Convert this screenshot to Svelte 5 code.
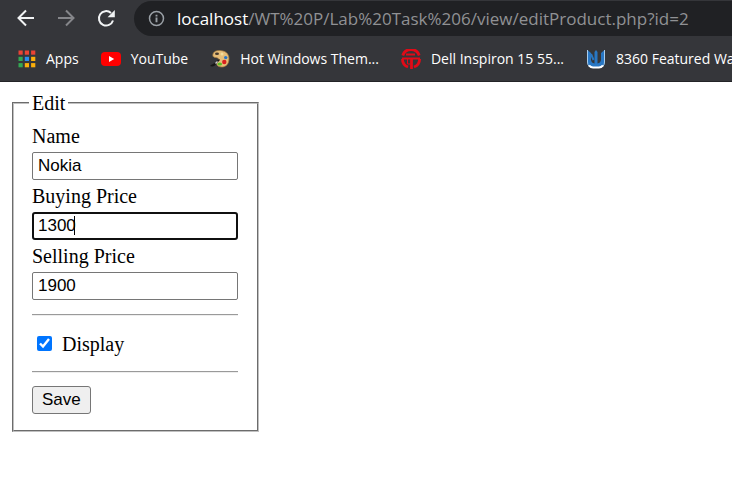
<script>
  let name = $state('Nokia');
  let buying = $state('1300');
  let selling = $state('1900');
  let display = $state(true);

  const appDots = [
    '#ea4335', '#ea4335', '#ea4335',
    '#34a853', '#2a8cf0', '#fbaf0b',
    '#34a853', '#fbaf0b', '#fbaf0b',
  ];
</script>

<header class="browser">
  <div class="toolbar">
    <nav class="controls">
      <button type="button" aria-label="Back">
        <svg viewBox="0 0 20 20" fill="none" stroke="#f1f3f4" stroke-width="2"><path d="M18 9H3M10 1.500L2.500 9L10 16.500" /></svg>
      </button>
      <button type="button" aria-label="Forward">
        <svg viewBox="0 0 20 20" fill="none" stroke="#85868a" stroke-width="2"><path d="M2 9H17M10 1.500L17.500 9L10 16.500" /></svg>
      </button>
      <button type="button" aria-label="Reload">
        <svg viewBox="0 0 20 20" fill="none" stroke="#f1f3f4" stroke-width="2"><path d="M17 11.500A7.200 7.200 0 1 1 15 4" /><path d="M18.800 1V8.200H11.600Z" fill="#f1f3f4" stroke="none" /></svg>
      </button>
    </nav>
    <div class="address">
      <svg viewBox="0 0 18 18" fill="none" stroke="#9aa0a6" stroke-width="1.600"><circle cx="9" cy="9" r="7.400" /><path d="M9 8V13M9 5V6.800" stroke-width="2" /></svg>
      <span class="url"><span class="host">localhost</span>/WT%20P/Lab%20Task%206/view/editProduct.php?id=2</span>
    </div>
  </div>

  <nav class="bookmarks">
    <a href="#apps">
      <svg class="apps" viewBox="0 0 18 18">
        {#each appDots as color, i}
          <rect x={(i % 3) * 6.3 + 0.5} y={Math.floor(i / 3) * 6.3 + 0.5} width="4.200" height="4.200" fill={color} />
        {/each}
      </svg>
      Apps
    </a>
    <a href="#youtube">
      <svg viewBox="0 0 20 20"><rect y="3" width="20" height="14" rx="4" fill="#f00" /><path d="M8 7V13L13.200 10Z" fill="#fff" /></svg>
      YouTube
    </a>
    <a href="#themes">
      <svg viewBox="0 0 20 20">
        <path d="M3 5C4 1.500 9 .8 13 2C18 3 20 8 18.500 13C17.500 17 13 19 9 17.500C6 16.500 6.500 13.500 8.500 11.500C9.500 9.500 7.500 8.500 5 8.500C3 8 2.500 7 3 5Z" fill="#e6bd78" stroke="#a77b3e" stroke-width=".7" />
        <ellipse cx="7" cy="4.800" rx="2" ry="1.300" fill="#45382c" />
        <circle cx="12" cy="5" r="1.500" fill="#f3dc9c" />
        <circle cx="15.700" cy="8.600" r="1.700" fill="#2674c9" />
        <circle cx="14.300" cy="13" r="2.200" fill="#d8201d" />
        <ellipse cx="9.800" cy="15" rx="2.300" ry="1.600" fill="#58bd27" />
        <path d="M0 17C2 15 3 15 5 14L9 10L10 11L6 15C5 17 3 18 0 17Z" fill="#171717" />
        <path d="M5 14L7 12L8 13L6 15Z" fill="#d0d0d0" />
      </svg>
      Hot Windows Them...
    </a>
    <a href="#dell">
      <svg viewBox="0 0 20 20" fill="none" stroke="#e20a17"><path d="M1.800 6.500A8.600 8.600 0 0 1 18.200 6.500M18.600 10A8.600 8.600 0 0 1 13 18M7 18A8.600 8.600 0 0 1 1.400 10" stroke-width="2.800" /><path d="M5 5.500H14M1 9.500H19" stroke-width="1.800" /><path d="M10.500 10V20" stroke-width="2.800" /><path d="M6.500 10V15H9" stroke-width="1" /></svg>
      Dell Inspiron 15 55...
    </a>
    <a href="#wallpapers">
      <svg viewBox="0 0 20 20">
        <path d="M1.500 1L5 4V11Q5.500 14 8.500 14.500V3L10 1L11.500 3V14.500Q14.500 14 15 11V4L18.500 1V13Q18.500 18 13 18H7Q1.500 18 1.500 13Z" fill="#2877c4" />
        <path d="M1.500 1V13Q1.500 18.500 7 18.500H13Q18.500 18.500 18.500 13V1" fill="none" stroke="#a9cdec" stroke-width="1" />
        <path d="M3 16.500Q5 18.500 7 18.500H13Q15 18.500 17 16.500" fill="none" stroke="#fff" stroke-width="2" />
        <path d="M5 5L7.500 11" stroke="#2877c4" stroke-width="2" />
      </svg>
      8360 Featured Wa
    </a>
  </nav>
</header>

<main>
  <form onsubmit={(e) => e.preventDefault()}>
    <fieldset>
      <legend>Edit</legend>
      <div class="fields">
        <label for="name">Name</label>
        <input class="text" id="name" type="text" bind:value={name} />
        <label for="buying">Buying Price</label>
        <div class="active">
          <input class="text" id="buying" type="text" bind:value={buying} />
          <span class="caret-layer" aria-hidden="true"><span class="caret"></span></span>
        </div>
        <label for="selling">Selling Price</label>
        <input class="text" id="selling" type="text" bind:value={selling} />
      </div>
      <hr />
      <div class="check">
        <input id="display" type="checkbox" bind:checked={display} />
        <label for="display">Display</label>
      </div>
      <hr />
      <button class="save" type="submit">Save</button>
    </fieldset>
  </form>
</main>

<style>
  :global(body) {
    margin: 0;
    background: #fff;
    overflow-x: hidden;
  }
  .browser {
    background: #35363a;
    border-bottom: 1px solid #232427;
    font-family: "Segoe UI", "Open Sans", sans-serif;
    overflow: hidden;
  }
  .toolbar {
    display: flex;
    align-items: center;
    gap: 18px;
    padding: 1px 0 0 16px;
  }
  .controls {
    display: flex;
    gap: 20px;
  }
  .controls button {
    display: flex;
    padding: 0;
    border: 0;
    background: none;
  }
  svg {
    display: block;
    flex: none;
    width: 20px;
    height: 20px;
  }
  .address {
    display: flex;
    flex: 1;
    min-width: 0;
    align-items: center;
    gap: 12px;
    box-sizing: border-box;
    height: 35px;
    padding-left: 14px;
    border-radius: 18px 0 0 18px;
    background: #202124;
  }
  .address svg {
    width: 17px;
    height: 17px;
  }
  .url {
    color: #909194;
    font-size: 17px;
    line-height: 24px;
    white-space: nowrap;
  }
  .host {
    color: #fff;
  }
  .bookmarks {
    display: flex;
    align-items: center;
    gap: 22px;
    height: 45px;
    padding-left: 18px;
    white-space: nowrap;
  }
  .bookmarks a {
    display: flex;
    flex: none;
    align-items: center;
    gap: 10px;
    color: #fff;
    font-size: 14px;
    line-height: 20px;
    text-decoration: none;
  }
  .bookmarks .apps {
    width: 18px;
    height: 18px;
  }
  main {
    padding: 9px 12px;
    color: #000;
    font-family: "Liberation Serif", "Times New Roman", serif;
    font-size: 20px;
    line-height: 24px;
  }
  form {
    display: flex;
  }
  fieldset {
    width: 206px;
    margin: 0;
    padding: 9px 19px 16px 18px;
    border: 2px groove #c0c0c0;
  }
  legend {
    margin-left: -3px;
    padding: 0 3px;
  }
  .fields {
    display: grid;
    row-gap: 4px;
  }
  .text {
    box-sizing: border-box;
    width: 100%;
    height: 28px;
    padding: 1px 5px;
    border: 1px solid #767676;
    border-radius: 2px;
    background: #fff;
    color: #000;
    font-family: "Liberation Sans", Arial, sans-serif;
    font-size: 17px;
  }
  .active {
    position: relative;
    display: flex;
  }
  .active .text {
    padding: 0 4px;
    border: 2px solid #101010;
    border-radius: 3px;
    outline: 0;
  }
  .caret-layer {
    position: absolute;
    inset: 4px auto auto 42px;
    pointer-events: none;
  }
  .caret {
    display: block;
    width: 1px;
    height: 19px;
    background: #000;
  }
  hr {
    margin: 14px 0 13px;
    border: 0;
    border-top: 1px solid #9a9a9a;
    border-bottom: 1px solid #eee;
  }
  .check {
    display: flex;
    align-items: baseline;
    gap: 10px;
    box-sizing: border-box;
    height: 28px;
    margin: 0 5px;
    padding-top: 3px;
  }
  .check input {
    width: 15px;
    height: 15px;
    margin: 0 0 1px;
    accent-color: #0075ff;
  }
  .save {
    box-sizing: border-box;
    display: block;
    height: 28px;
    padding: 0 9px;
    border: 1px solid #767676;
    border-radius: 3px;
    background: #efefef;
    color: #000;
    font-family: "Liberation Sans", Arial, sans-serif;
    font-size: 17px;
  }
</style>
